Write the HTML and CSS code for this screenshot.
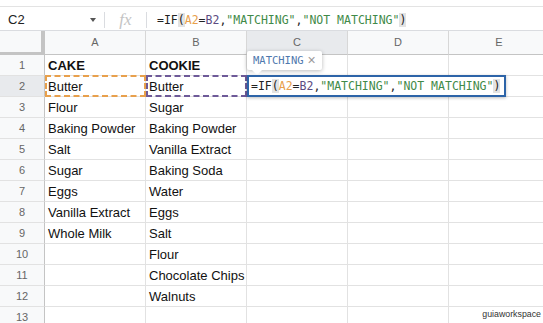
FILE: index.html
```html
<!DOCTYPE html>
<html>
<head>
<meta charset="utf-8">
<link rel="stylesheet" href="styles.css">
</head>
<body>
<div class="app">
  <div class="topstrip"></div>
  <div class="fbar">
    <div class="namebox"><span class="ref">C2</span><span class="caret"></span></div>
    <div class="sep"></div>
    <div class="fx">fx</div>
    <div class="sep"></div>
    <div class="formula">=IF<span class="paren">(</span><span class="ra">A2</span>=<span class="rb">B2</span>,<span class="str">"MATCHING"</span>,<span class="str">"NOT MATCHING"</span><span class="paren">)</span></div>
  </div>
  <div class="grid">
    <div class="corner"></div>
    <div class="ch">A</div><div class="ch">B</div><div class="ch sel">C</div><div class="ch">D</div><div class="ch">E</div>

    <div class="rh">1</div><div class="c b">CAKE</div><div class="c b">COOKIE</div><div class="c"></div><div class="c"></div><div class="c"></div>
    <div class="rh sel">2</div><div class="c dash-a">Butter</div><div class="c dash-b">Butter</div>
    <div class="c editcell">
      <div class="tip"><span class="tiptext">MATCHING</span><span class="tipx">×</span></div>
      <div class="editor">=IF<span class="paren">(</span><span class="ra">A2</span>=<span class="rb">B2</span>,<span class="str">"MATCHING"</span>,<span class="str">"NOT MATCHING"</span><span class="paren">)</span></div>
    </div><div class="c"></div><div class="c"></div>
    <div class="rh">3</div><div class="c">Flour</div><div class="c">Sugar</div><div class="c"></div><div class="c"></div><div class="c"></div>
    <div class="rh">4</div><div class="c">Baking Powder</div><div class="c">Baking Powder</div><div class="c"></div><div class="c"></div><div class="c"></div>
    <div class="rh">5</div><div class="c">Salt</div><div class="c">Vanilla Extract</div><div class="c"></div><div class="c"></div><div class="c"></div>
    <div class="rh">6</div><div class="c">Sugar</div><div class="c">Baking Soda</div><div class="c"></div><div class="c"></div><div class="c"></div>
    <div class="rh">7</div><div class="c">Eggs</div><div class="c">Water</div><div class="c"></div><div class="c"></div><div class="c"></div>
    <div class="rh">8</div><div class="c">Vanilla Extract</div><div class="c">Eggs</div><div class="c"></div><div class="c"></div><div class="c"></div>
    <div class="rh">9</div><div class="c">Whole Milk</div><div class="c">Salt</div><div class="c"></div><div class="c"></div><div class="c"></div>
    <div class="rh">10</div><div class="c"></div><div class="c">Flour</div><div class="c"></div><div class="c"></div><div class="c"></div>
    <div class="rh">11</div><div class="c"></div><div class="c">Chocolate Chips</div><div class="c"></div><div class="c"></div><div class="c"></div>
    <div class="rh">12</div><div class="c"></div><div class="c">Walnuts</div><div class="c"></div><div class="c"></div><div class="c"></div>
    <div class="rh">13</div><div class="c"></div><div class="c"></div><div class="c"></div><div class="c"></div><div class="c"></div>
  </div>
  <div class="watermark">guiaworkspace</div>
</div>
</body>
</html>
```
FILE: styles.css
```css
html, body {
  margin: 0;
  padding: 0;
  background: #fff;
}
.app {
  position: relative;
  width: 543px;
  height: 323px;
  overflow: hidden;
  font-family: "Liberation Sans", Arial, sans-serif;
  color: #222;
}
.topstrip {
  height: 7px;
  border-bottom: 1px solid #e3e3e3;
  box-sizing: border-box;
}
.fbar {
  display: flex;
  align-items: center;
  height: 24px;
  padding-top: 2px;
  border-bottom: 1px solid #dadce0;
  box-sizing: border-box;
}
.namebox {
  width: 104px;
  display: flex;
  align-items: center;
  padding-left: 8px;
  box-sizing: border-box;
}
.ref {
  font-size: 13px;
  color: #222;
  flex: 1;
}
.caret {
  width: 0;
  height: 0;
  border-left: 3.5px solid transparent;
  border-right: 3.5px solid transparent;
  border-top: 4px solid #555;
  margin-right: 8px;
  margin-top: 1px;
}
.sep {
  width: 1px;
  height: 16px;
  background: #dadce0;
}
.fx {
  width: 41px;
  text-align: center;
  font-family: "Liberation Serif", serif;
  font-style: italic;
  font-size: 17px;
  color: #c4c4c4;
  line-height: 20px;
}
.formula {
  padding-left: 10px;
  font-family: "DejaVu Sans Mono", monospace;
  font-size: 11.5px;
  color: #222;
  white-space: nowrap;
}
.paren {
  background: #e3e3e3;
}
.ra { color: #e8a04c; }
.rb { color: #5b4b82; }
.str { color: #3f8a48; }

.grid {
  display: grid;
  grid-template-columns: 45px 101px 101px 101px 101px 101px;
  grid-template-rows: 24px repeat(13, 21px);
}
.corner {
  background: #f8f9fa;
  border-right: 4px solid #c4c4c4;
  border-bottom: 3px solid #c4c4c4;
  box-sizing: border-box;
}
.ch {
  background: #f8f9fa;
  border-right: 1px solid #d7d7d7;
  border-bottom: 1px solid #c4c4c4;
  box-sizing: border-box;
  font-size: 11px;
  color: #666;
  text-align: center;
  line-height: 23px;
}
.rh {
  background: #f8f9fa;
  border-right: 1px solid #c4c4c4;
  border-bottom: 1px solid #e2e2e2;
  box-sizing: border-box;
  font-size: 11px;
  color: #666;
  text-align: center;
  line-height: 21px;
}
.sel {
  background: #e8eaed;
}
.c {
  border-right: 1px solid #e2e2e2;
  border-bottom: 1px solid #e2e2e2;
  box-sizing: border-box;
  font-size: 13px;
  line-height: 21px;
  padding-left: 3px;
  white-space: nowrap;
  color: #111;
  position: relative;
}
.c.b {
  font-weight: bold;
}
.dash-a::after, .dash-b::after {
  content: "";
  position: absolute;
  left: 0;
  top: -1px;
  right: -1px;
  bottom: -1px;
  border: 2px dashed #e8a04c;
}
.dash-b::after {
  border-color: #6e5a98;
}
.editcell {
  z-index: 2;
}
.editor {
  position: absolute;
  left: 0;
  top: -1px;
  width: 259px;
  height: 22px;
  box-sizing: border-box;
  border: 2px solid #2d64a8;
  background: #fff;
  font-family: "DejaVu Sans Mono", monospace;
  font-size: 11.5px;
  line-height: 18px;
  padding-left: 2px;
  color: #222;
  white-space: nowrap;
  box-shadow: 0 1px 3px rgba(0,0,0,0.25);
}
.tip {
  position: absolute;
  left: 0;
  top: -25px;
  height: 19px;
  padding: 0 6px 0 6px;
  background: #fff;
  box-shadow: 0 1px 4px rgba(0,0,0,0.28);
  border-radius: 2px;
  display: flex;
  align-items: center;
  gap: 4px;
  font-family: "DejaVu Sans Mono", monospace;
  font-size: 10.5px;
  white-space: nowrap;
}
.tip::after {
  content: "";
  position: absolute;
  left: 5px;
  bottom: -5px;
  width: 0;
  height: 0;
  border-left: 5px solid transparent;
  border-right: 5px solid transparent;
  border-top: 5px solid #fff;
}
.tiptext {
  color: #4f78ad;
}
.tipx {
  font-family: "Liberation Sans", sans-serif;
  font-size: 14px;
  color: #999;
}
.watermark {
  position: absolute;
  right: 2px;
  bottom: 4px;
  font-family: "Liberation Sans", sans-serif;
  font-size: 8.8px;
  color: #333;
  background: #fff;
  padding-left: 2px;
}
```
